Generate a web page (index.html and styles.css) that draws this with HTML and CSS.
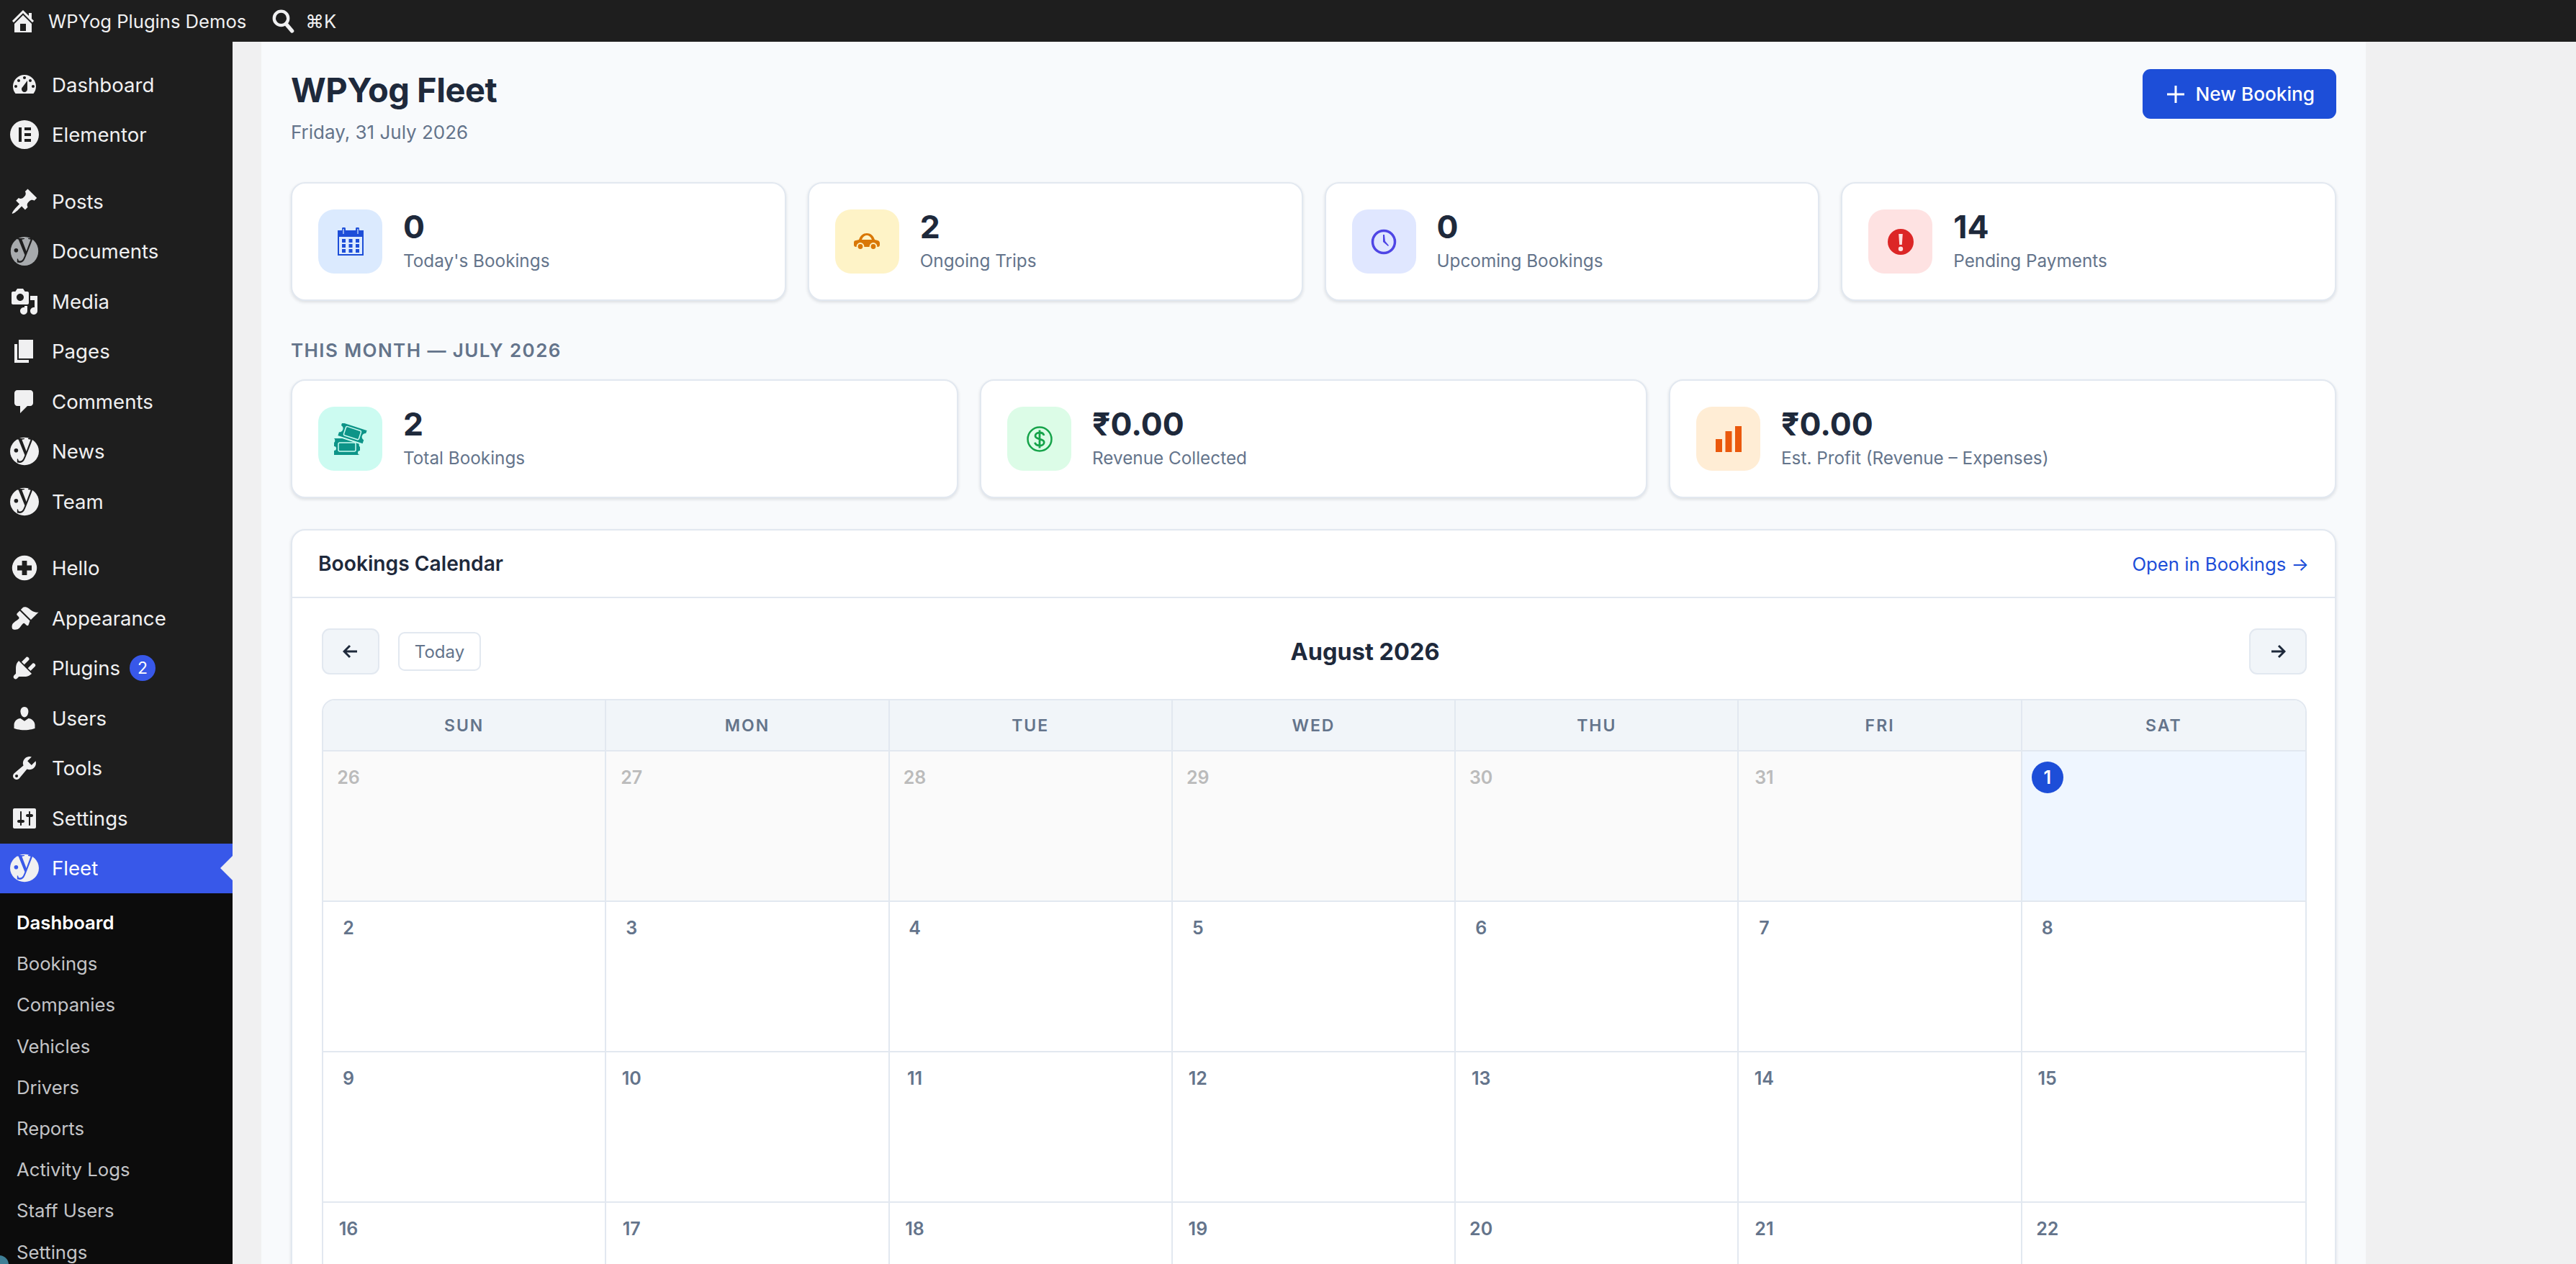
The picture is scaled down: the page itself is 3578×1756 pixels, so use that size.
FILE: index.html
```html
<!DOCTYPE html>
<html lang="en">
<head>
    <meta charset="UTF-8">
    <title>WPYog Fleet</title>
    <link rel="stylesheet" href="styles.css">
</head>
<body>
    <header class="topbar">
        <a class="topbar-item">
            <svg class="topbar-home" viewBox="0 0 20 20"><path d="M16 8.5l1.53 1.53-1.06 1.06L10 4.62l-6.47 6.47-1.06-1.06L10 2.5l4 4v-2h2v4zm-6-2.46l6 5.99V18H4v-5.97zM12 17v-5H8v5h4z"/></svg>
            <span>WPYog Plugins Demos</span>
        </a>
        <a class="topbar-item topbar-search">
            <svg class="topbar-icon" viewBox="0 0 20 20"><circle cx="8.6" cy="8" r="5.4" fill="none" stroke="currentColor" stroke-width="2.4"/><path d="M12.4 12.4l4.6 5.4" fill="none" stroke="currentColor" stroke-width="3" stroke-linecap="round"/></svg>
            <span>⌘K</span>
        </a>
    </header>

    <div class="layout">
        <nav class="sidebar">
            <a class="menu-item">
                <svg class="menu-icon" viewBox="0 0 20 20"><path fill-rule="evenodd" d="M3.76 16h12.48c1.1-1.37 1.76-3.11 1.76-5 0-4.42-3.58-8-8-8s-8 3.58-8 8c0 1.89.66 3.63 1.76 5zM10 4c.55 0 1 .45 1 1s-.45 1-1 1-1-.45-1-1 .45-1 1-1zM6 6c.55 0 1 .45 1 1s-.45 1-1 1-1-.45-1-1 .45-1 1-1zm8 0c.55 0 1 .45 1 1s-.45 1-1 1-1-.45-1-1 .45-1 1-1zm-5.37 5.55L12 7v6c0 1.1-.9 2-2 2s-2-.9-2-2c0-.57.24-1.08.63-1.45zM4 10c.55 0 1 .45 1 1s-.45 1-1 1-1-.45-1-1 .45-1 1-1zm12 0c.55 0 1 .45 1 1s-.45 1-1 1-1-.45-1-1 .45-1 1-1z"/></svg>
                <span>Dashboard</span>
            </a>
            <a class="menu-item menu-item-last">
                <svg class="menu-icon" viewBox="0 0 20 20"><path fill-rule="evenodd" d="M10 0a10 10 0 1 0 0 20 10 10 0 0 0 0-20zM6 5h2v10H6zm4 0h4.5v2H10zm0 4h4.5v2H10zm0 4h4.5v2H10z"/></svg>
                <span>Elementor</span>
            </a>
            <a class="menu-item">
                <svg class="menu-icon" viewBox="0 0 20 20"><path d="M10.44 3.02l1.82-1.82 6.36 6.35-1.83 1.82c-1.05-.68-2.48-.57-3.41.36l-.75.75c-.92.93-1.04 2.35-.35 3.41l-1.83 1.82-2.41-2.41-2.8 2.79c-.42.42-3.38 2.71-3.8 2.29s1.86-3.39 2.28-3.81l2.79-2.79L4.1 9.36l1.83-1.82c1.05.69 2.48.57 3.4-.36l.75-.75c.93-.92 1.05-2.35.36-3.41z"/></svg>
                <span>Posts</span>
            </a>
            <a class="menu-item">
                <svg class="menu-icon logo-muted" viewBox="0 0 20 20"><ellipse cx="10" cy="10" rx="9.6" ry="10"/><circle class="logo-cut" cx="4.2" cy="9.4" r="1.4"/><text class="logo-y" x="10.6" y="12.6" text-anchor="middle">y</text></svg>
                <span>Documents</span>
            </a>
            <a class="menu-item">
                <svg class="menu-icon" viewBox="0 0 20 20"><path d="M13 11V4c0-.55-.45-1-1-1h-1.67L9 1H5L3.67 3H2c-.55 0-1 .45-1 1v7c0 .55.45 1 1 1h10c.55 0 1-.45 1-1zM7 4.5c1.38 0 2.5 1.12 2.5 2.5S8.38 9.5 7 9.5 4.5 8.38 4.5 7 5.62 4.5 7 4.5zM14 6h5v10.5c0 1.38-1.12 2.5-2.5 2.5S14 17.88 14 16.5s1.12-2.5 2.5-2.5c.17 0 .34.02.5.05V9h-3V6zm-4 8.05V13h2v3.5c0 1.38-1.12 2.5-2.5 2.5S7 17.88 7 16.5 8.12 14 9.5 14c.17 0 .34.02.5.05z" fill-rule="evenodd"/></svg>
                <span>Media</span>
            </a>
            <a class="menu-item">
                <svg class="menu-icon" viewBox="0 0 20 20"><path d="M6 15V2h10v13H6zm-1 1h8v2H3V5h2v11z"/></svg>
                <span>Pages</span>
            </a>
            <a class="menu-item">
                <svg class="menu-icon" viewBox="0 0 20 20"><path d="M5 2h9c1.1 0 2 .9 2 2v7c0 1.1-.9 2-2 2h-2l-5 5v-5H5c-1.1 0-2-.9-2-2V4c0-1.1.9-2 2-2z"/></svg>
                <span>Comments</span>
            </a>
            <a class="menu-item">
                <svg class="menu-icon" viewBox="0 0 20 20"><ellipse cx="10" cy="10" rx="10" ry="9.6"/><circle class="logo-cut" cx="4.2" cy="9.4" r="1.4"/><text class="logo-y" x="10.6" y="12.6" text-anchor="middle">y</text></svg>
                <span>News</span>
            </a>
            <a class="menu-item menu-item-last">
                <svg class="menu-icon" viewBox="0 0 20 20"><ellipse cx="10" cy="10" rx="10" ry="9.6"/><circle class="logo-cut" cx="4.2" cy="9.4" r="1.4"/><text class="logo-y" x="10.6" y="12.6" text-anchor="middle">y</text></svg>
                <span>Team</span>
            </a>
            <a class="menu-item">
                <svg class="menu-icon" viewBox="0 0 20 20"><path fill-rule="evenodd" d="M10 1.4a8.6 8.6 0 1 0 0 17.2 8.6 8.6 0 0 0 0-17.2zM8.3 5h3.4v3.3H15v3.4h-3.3V15H8.3v-3.3H5V8.3h3.3z"/></svg>
                <span>Hello</span>
            </a>
            <a class="menu-item">
                <svg class="menu-icon" viewBox="0 0 20 20"><path d="M14.48 11.06L7.41 3.99l1.5-1.5c.5-.56 2.3-.47 3.51.32 1.21.8 1.43 1.28 2.91 2.1 1.18.64 2.45 1.26 4.45.85zm-.71.71L6.7 4.7 4.93 6.47c-.39.39-.39 1.02 0 1.41l1.06 1.06c.39.39.39 1.03 0 1.42-.6.6-1.43 1.11-2.21 1.69-.35.26-.7.53-1.01.84C1.43 13.71.96 15.56 1.53 17.1c.09.24.33.48.57.57 1.54.57 3.39.1 4.23-.74.31-.31.58-.66.84-1.01.58-.78 1.09-1.61 1.69-2.21.39-.39 1.02-.39 1.41 0l1.06 1.06c.39.39 1.02.39 1.41 0z"/></svg>
                <span>Appearance</span>
            </a>
            <a class="menu-item">
                <svg class="menu-icon" viewBox="0 0 20 20"><path d="M13.11 4.36L9.87 7.6 8 5.73l3.24-3.24c.35-.34 1.05-.2 1.56.32.52.51.66 1.21.31 1.55zm-8 1.77l.91-1.12 9.01 9.01-1.19.84c-.71.71-2.63 1.16-3.82 1.16H6.14L4.9 17.26c-.59.59-1.54.59-2.12 0-.59-.58-.59-1.53 0-2.12l1.24-1.24v-3.88c0-1.13.4-3.19 1.09-3.89zm7.26 3.97l3.24-3.24c.34-.35 1.04-.21 1.55.31.52.51.66 1.21.31 1.55l-3.24 3.25z"/></svg>
                <span>Plugins</span>
                <span class="menu-badge">2</span>
            </a>
            <a class="menu-item">
                <svg class="menu-icon" viewBox="0 0 20 20"><path d="M10 9.25c-2.27 0-2.73-3.44-2.73-3.44C7 4.02 7.82 2 9.97 2c2.16 0 2.98 2.02 2.71 3.81 0 0-.41 3.44-2.68 3.44zm0 2.57L12.72 10c2.39 0 4.52 2.33 4.52 4.53v2.49s-3.65 1.13-7.24 1.13c-3.65 0-7.24-1.13-7.24-1.13v-2.49c0-2.25 1.94-4.48 4.47-4.48z"/></svg>
                <span>Users</span>
            </a>
            <a class="menu-item">
                <svg class="menu-icon" viewBox="0 0 20 20"><path fill-rule="evenodd" d="M16.68 9.77c-1.34 1.34-3.3 1.67-4.95.99l-5.41 6.52c-.99.99-2.59.99-3.58 0s-.99-2.59 0-3.57l6.52-5.42c-.68-1.65-.35-3.61.99-4.95 1.28-1.28 3.12-1.62 4.72-1.06l-2.89 2.89 2.82 2.82 2.86-2.87c.53 1.58.18 3.39-1.08 4.65zM3.81 16.21c.4.39 1.04.39 1.43 0 .4-.4.4-1.04 0-1.43-.39-.4-1.03-.4-1.43 0-.39.39-.39 1.03 0 1.43z"/></svg>
                <span>Tools</span>
            </a>
            <a class="menu-item">
                <svg class="menu-icon" viewBox="0 0 20 20"><path fill-rule="evenodd" d="M18 16V4c0-.55-.45-1-1-1H3c-.55 0-1 .45-1 1v12c0 .55.45 1 1 1h14c.55 0 1-.45 1-1zM8 11h1c.55 0 1 .45 1 1s-.45 1-1 1H8v1.5c0 .28-.22.5-.5.5s-.5-.22-.5-.5V13H6c-.55 0-1-.45-1-1s.45-1 1-1h1V5.5c0-.28.22-.5.5-.5s.5.22.5.5V11zm5-2h-1c-.55 0-1-.45-1-1s.45-1 1-1h1V5.5c0-.28.22-.5.5-.5s.5.22.5.5V7h1c.55 0 1 .45 1 1s-.45 1-1 1h-1v5.5c0 .28-.22.5-.5.5s-.5-.22-.5-.5V9z"/></svg>
                <span>Settings</span>
            </a>
            <a class="menu-item menu-item-active">
                <svg class="menu-icon" viewBox="0 0 20 20"><ellipse cx="10" cy="10" rx="10" ry="9.6"/><circle class="logo-cut" cx="4.2" cy="9.4" r="1.4"/><text class="logo-y" x="10.6" y="12.6" text-anchor="middle">y</text></svg>
                <span>Fleet</span>
            </a>
            <div class="submenu">
                <a class="submenu-item submenu-item-active">Dashboard</a>
                <a class="submenu-item">Bookings</a>
                <a class="submenu-item">Companies</a>
                <a class="submenu-item">Vehicles</a>
                <a class="submenu-item">Drivers</a>
                <a class="submenu-item">Reports</a>
                <a class="submenu-item">Activity Logs</a>
                <a class="submenu-item">Staff Users</a>
                <a class="submenu-item">Settings</a>
            </div>
        </nav>

        <main class="content">
            <div class="page">
                <div class="page-head">
                    <div>
                        <h1>WPYog Fleet</h1>
                        <p class="page-date">Friday, 31 July 2026</p>
                    </div>
                    <a class="btn-primary">
                        <svg class="btn-plus" viewBox="0 0 24 24"><path d="M12 0v24M0 12h24"/></svg>
                        New Booking
                    </a>
                </div>

                <div class="stat-row stat-row-four">
                    <div class="stat-card">
                        <div class="stat-icon stat-icon-blue">
                            <svg width="36" height="39" viewBox="0 0 36 39"><path fill-rule="evenodd" d="M0 4h6V2a2.5 2.5 0 0 1 5 0v2h14V2a2.5 2.5 0 0 1 5 0v2h6v35H0zM2 13v24h32V13zM7.4 2v7h1.2V2zm20 0v7h1.2V2z"/><path d="M6 16h5v5H6zm9.5 0h5v5h-5zm9.5 0h5v5h-5zM6 23h5v5H6zm9.5 0h5v5h-5zm9.5 0h5v5h-5zM6 30h5v5H6zm9.5 0h5v5h-5zm9.5 0h5v5h-5z"/></svg>
                        </div>
                        <div class="stat-text">
                            <div class="stat-value">0</div>
                            <div class="stat-label">Today's Bookings</div>
                        </div>
                    </div>
                    <div class="stat-card">
                        <div class="stat-icon stat-icon-amber">
                            <svg width="36" height="24" viewBox="0 0 36 24"><path fill-rule="evenodd" d="M7 9C9 3 13 0 18 0s9 3 11 9l4 1c2 .5 3 2 3 4v2c0 2-1 3-3 3H3c-2 0-3-1-3-3v-3c0-2 1-3 3-3zm4 0h14c-1.5-3.500-3.5-6-7-6s-5.5 2.500-7 6z"/><circle class="car-wheel" cx="9" cy="18.5" r="4.4"/><circle class="car-wheel" cx="27" cy="18.5" r="4.4"/></svg>
                        </div>
                        <div class="stat-text">
                            <div class="stat-value">2</div>
                            <div class="stat-label">Ongoing Trips</div>
                        </div>
                    </div>
                    <div class="stat-card">
                        <div class="stat-icon stat-icon-indigo">
                            <svg width="36" height="36" viewBox="0 0 36 36"><circle cx="18" cy="18" r="15.5" fill="none" stroke="currentColor" stroke-width="3.5"/><path d="M17 8h2l1 9 5 6-1 1-7-6z"/></svg>
                        </div>
                        <div class="stat-text">
                            <div class="stat-value">0</div>
                            <div class="stat-label">Upcoming Bookings</div>
                        </div>
                    </div>
                    <div class="stat-card">
                        <div class="stat-icon stat-icon-red">
                            <svg width="36" height="36" viewBox="0 0 36 36"><path fill-rule="evenodd" d="M18 0a18 18 0 1 0 0 36 18 18 0 0 0 0-36zM15.2 7h5.6l-1 15h-3.6zM18 24.5a3.2 3.2 0 1 1 0 6.4 3.2 3.2 0 0 1 0-6.4z"/></svg>
                        </div>
                        <div class="stat-text">
                            <div class="stat-value">14</div>
                            <div class="stat-label">Pending Payments</div>
                        </div>
                    </div>
                </div>

                <div class="section-label">THIS MONTH — JULY 2026</div>

                <div class="stat-row stat-row-three">
                    <div class="stat-card">
                        <div class="stat-icon stat-icon-teal">
                            <svg width="46" height="44" viewBox="0 0 46 44">
                                <path d="M0 21h36v6a4 4 0 0 0 0 6v5a3 3 0 0 0 0 6H0v-6a3 3 0 0 0 0-6v-5a4 4 0 0 0 0-6z"/>
                                <rect class="ticket-line" x="6" y="27" width="24" height="12" rx="2"/>
                                <g transform="rotate(18 25 15)">
                                    <path class="ticket-top" d="M6 3h38v6a4 4 0 0 0 0 8v7H6v-7a4 4 0 0 0 0-8z"/>
                                    <rect class="ticket-line" x="14" y="7" width="22" height="13" rx="2"/>
                                </g>
                            </svg>
                        </div>
                        <div class="stat-text">
                            <div class="stat-value">2</div>
                            <div class="stat-label">Total Bookings</div>
                        </div>
                    </div>
                    <div class="stat-card">
                        <div class="stat-icon stat-icon-green">
                            <svg width="36" height="36" viewBox="0 0 36 36"><circle cx="18" cy="18" r="16.5" fill="none" stroke="currentColor" stroke-width="2.5"/><path d="M24 13c-.5-2.5-3-4-6-4s-6 1.8-6 4.6c0 6 12.200 3 12.200 8.800 0 2.800-3 4.600-6.200 4.600s-6-1.500-6.500-4.200M18 5.500v25" fill="none" stroke="currentColor" stroke-width="2.8"/></svg>
                        </div>
                        <div class="stat-text">
                            <div class="stat-value">₹0.00</div>
                            <div class="stat-label">Revenue Collected</div>
                        </div>
                    </div>
                    <div class="stat-card">
                        <div class="stat-icon stat-icon-orange">
                            <svg width="36" height="36" viewBox="0 0 36 36"><path d="M0 18h9v18H0zm13.5-11h9v29h-9zM27 0h9v36h-9z"/></svg>
                        </div>
                        <div class="stat-text">
                            <div class="stat-value">₹0.00</div>
                            <div class="stat-label">Est. Profit (Revenue – Expenses)</div>
                        </div>
                    </div>
                </div>

                <section class="calendar-card">
                    <div class="calendar-head">
                        <h2>Bookings Calendar</h2>
                        <a class="calendar-link">Open in Bookings →</a>
                    </div>
                    <div class="calendar-body">
                        <div class="calendar-nav">
                            <div class="calendar-nav-left">
                                <button class="nav-btn">
                                    <svg class="nav-arrow" viewBox="0 0 22 22"><path d="M20 11H3M10 3l-8 8 8 8"/></svg>
                                </button>
                                <button class="today-btn">Today</button>
                            </div>
                            <div class="calendar-title">August 2026</div>
                            <button class="nav-btn">
                                <svg class="nav-arrow" viewBox="0 0 22 22"><path d="M2 11h17M12 3l8 8-8 8"/></svg>
                            </button>
                        </div>
                        <div class="calendar-grid">
                            <div class="day-head">SUN</div>
                            <div class="day-head">MON</div>
                            <div class="day-head">TUE</div>
                            <div class="day-head">WED</div>
                            <div class="day-head">THU</div>
                            <div class="day-head">FRI</div>
                            <div class="day-head">SAT</div>

                            <div class="day day-other"><span class="day-num">26</span></div>
                            <div class="day day-other"><span class="day-num">27</span></div>
                            <div class="day day-other"><span class="day-num">28</span></div>
                            <div class="day day-other"><span class="day-num">29</span></div>
                            <div class="day day-other"><span class="day-num">30</span></div>
                            <div class="day day-other"><span class="day-num">31</span></div>
                            <div class="day day-today"><span class="day-num">1</span></div>

                            <div class="day"><span class="day-num">2</span></div>
                            <div class="day"><span class="day-num">3</span></div>
                            <div class="day"><span class="day-num">4</span></div>
                            <div class="day"><span class="day-num">5</span></div>
                            <div class="day"><span class="day-num">6</span></div>
                            <div class="day"><span class="day-num">7</span></div>
                            <div class="day"><span class="day-num">8</span></div>

                            <div class="day"><span class="day-num">9</span></div>
                            <div class="day"><span class="day-num">10</span></div>
                            <div class="day"><span class="day-num">11</span></div>
                            <div class="day"><span class="day-num">12</span></div>
                            <div class="day"><span class="day-num">13</span></div>
                            <div class="day"><span class="day-num">14</span></div>
                            <div class="day"><span class="day-num">15</span></div>

                            <div class="day"><span class="day-num">16</span></div>
                            <div class="day"><span class="day-num">17</span></div>
                            <div class="day"><span class="day-num">18</span></div>
                            <div class="day"><span class="day-num">19</span></div>
                            <div class="day"><span class="day-num">20</span></div>
                            <div class="day"><span class="day-num">21</span></div>
                            <div class="day"><span class="day-num">22</span></div>
                        </div>
                    </div>
                </section>
            </div>
        </main>
    </div>
    <div class="screen-corner"></div>
</body>
</html>
```

FILE: styles.css
```css
html, body {
    margin: 0;
    height: 100%;
    overflow: hidden;
}

body {
    font-family: Inter, "Noto Sans", sans-serif;
    background: #f0f0f1;
    color: #1e293b;
}

h1, h2, p {
    margin: 0;
}

.topbar {
    display: flex;
    align-items: center;
    height: 58px;
    background: #1e1e1e;
    color: #f0f0f1;
    font-size: 25.6px;
}

.topbar-item {
    display: flex;
    align-items: center;
    gap: 15px;
    padding-left: 12px;
}

.topbar-search {
    gap: 13px;
    padding-left: 33px;
}

.topbar-home {
    width: 40px;
    height: 40px;
    fill: currentColor;
}

.topbar-icon {
    width: 36px;
    height: 36px;
    fill: currentColor;
}

.layout {
    display: flex;
    height: calc(100vh - 58px);
}

.sidebar {
    width: 323px;
    flex: none;
    box-sizing: border-box;
    padding-top: 25px;
    background: #1e1e1e;
    color: #f0f0f1;
    font-size: 27.6px;
}

.menu-item {
    position: relative;
    display: flex;
    align-items: center;
    height: 69.5px;
}

.menu-item-last {
    margin-bottom: 23px;
}

.menu-icon {
    width: 40px;
    height: 40px;
    margin: 0 18px 0 14px;
    fill: #f0f0f1;
    flex: none;
    overflow: visible;
}

.logo-muted {
    fill: #a7aaad;
}

.logo-cut {
    fill: #1e1e1e;
}

.logo-y {
    font-family: "Liberation Serif", serif;
    font-size: 25px;
    fill: #1e1e1e;
}

.menu-badge {
    width: 36px;
    height: 36px;
    margin-left: 13px;
    border-radius: 50%;
    background: #3858e9;
    color: #fff;
    font-size: 23px;
    line-height: 36px;
    text-align: center;
}

.menu-item-active {
    background: #3858e9;
    color: #fff;
}

.menu-item-active .logo-cut {
    fill: #3858e9;
}

.menu-item-active .logo-y {
    fill: #3858e9;
}

.menu-item-active::after {
    content: "";
    position: absolute;
    top: 50%;
    right: 0;
    margin-top: -17px;
    border: 17px solid transparent;
    border-right-color: #f0f0f1;
    border-left-width: 0;
}

.submenu {
    padding-top: 12px;
    min-height: 600px;
    background: #0c0c0c;
    color: #c3c4c7;
    font-size: 25.7px;
}

.submenu-item {
    display: block;
    height: 57.2px;
    padding-left: 23px;
    line-height: 57.2px;
}

.submenu-item-active {
    color: #fff;
    font-weight: 600;
}

.content {
    flex: 1;
    padding-left: 40px;
}

.page {
    width: 2923px;
    height: 100%;
    box-sizing: border-box;
    padding: 38px 41px 0 41px;
    background: #f8fafc;
}

.page-head {
    display: flex;
    justify-content: space-between;
    align-items: flex-start;
    height: 157px;
}

h1 {
    font-size: 47px;
    font-weight: 700;
    line-height: 58px;
    letter-spacing: -0.5px;
}

.page-date {
    margin-top: 11px;
    font-size: 26px;
    line-height: 38px;
    color: #64748b;
}

.btn-primary {
    display: flex;
    align-items: center;
    gap: 15px;
    height: 69px;
    box-sizing: border-box;
    padding: 0 30px 0 34px;
    border-radius: 11px;
    background: #1d4ed8;
    color: #fff;
    font-size: 26.2px;
    font-weight: 500;
}

.btn-plus {
    width: 24px;
    height: 24px;
    stroke: #fff;
    stroke-width: 3;
    fill: none;
}

.stat-row {
    display: grid;
    gap: 30px;
}

.stat-row-four {
    grid-template-columns: repeat(4, 1fr);
}

.stat-row-three {
    grid-template-columns: repeat(3, 1fr);
}

.stat-card {
    display: flex;
    align-items: center;
    gap: 29px;
    box-sizing: border-box;
    height: 165px;
    padding: 0 36px;
    border: 2px solid #e2e8f0;
    border-radius: 20px;
    background: #fff;
    box-shadow: 0 2px 4px rgba(15, 23, 42, 0.12);
}

.stat-icon {
    display: flex;
    align-items: center;
    justify-content: center;
    width: 89px;
    height: 89px;
    flex: none;
    border-radius: 22px;
}

.stat-icon svg {
    fill: currentColor;
}

.stat-icon-blue {
    background: #dbeafe;
    color: #1d4ed8;
}

.stat-icon-amber {
    background: #fef3c7;
    color: #d97706;
}

.car-wheel {
    stroke: #fef3c7;
    stroke-width: 2;
}

.stat-icon-indigo {
    background: #e0e7ff;
    color: #4f46e5;
}

.stat-icon-red {
    background: #fee2e2;
    color: #dc2626;
}

.stat-icon-teal {
    background: #ccfbf1;
    color: #0d9488;
}

.ticket-top {
    stroke: #ccfbf1;
    stroke-width: 2;
}

.stat-icon .ticket-line {
    fill: none;
    stroke: #ccfbf1;
    stroke-width: 1.5;
}

.stat-icon-green {
    background: #dcfce7;
    color: #16a34a;
}

.stat-icon-orange {
    background: #ffedd5;
    color: #ea580c;
}

.stat-text {
    padding-bottom: 3px;
}

.stat-value {
    font-size: 44.5px;
    font-weight: 700;
    line-height: 50px;
}

.stat-label {
    margin-top: 6px;
    font-size: 24.3px;
    line-height: 32px;
    color: #64748b;
}

.section-label {
    margin: 49px 0 20px;
    font-size: 26px;
    font-weight: 600;
    line-height: 40px;
    letter-spacing: 1.4px;
    color: #64748b;
}

.calendar-card {
    margin-top: 43px;
    border: 2px solid #e2e8f0;
    border-radius: 20px;
    background: #fff;
    box-shadow: 0 2px 4px rgba(15, 23, 42, 0.12);
}

.calendar-head {
    display: flex;
    justify-content: space-between;
    align-items: center;
    height: 92px;
    padding: 0 36px;
    border-bottom: 2px solid #e2e8f0;
}

h2 {
    font-size: 28.2px;
    font-weight: 600;
}

.calendar-link {
    font-size: 25.7px;
    color: #1d4ed8;
}

.calendar-body {
    padding: 42px 39px 0 41px;
}

.calendar-nav {
    display: flex;
    justify-content: space-between;
    align-items: center;
    height: 64px;
}

.calendar-nav-left {
    display: flex;
    align-items: center;
    gap: 26px;
}

.nav-btn {
    display: flex;
    align-items: center;
    justify-content: center;
    width: 80px;
    height: 64px;
    padding: 0;
    border: 2px solid #e2e8f0;
    border-radius: 11px;
    background: #f1f5f9;
}

.nav-arrow {
    width: 22px;
    height: 22px;
    fill: none;
    stroke: #1e293b;
    stroke-width: 3;
}

.today-btn {
    width: 115px;
    height: 54px;
    padding: 0;
    border: 2px solid #e2e8f0;
    border-radius: 9px;
    background: #fff;
    font-family: inherit;
    font-size: 24px;
    color: #64748b;
}

.calendar-title {
    font-size: 32.5px;
    font-weight: 700;
}

.calendar-grid {
    display: grid;
    grid-template-columns: repeat(7, 1fr);
    grid-template-rows: 71px;
    grid-auto-rows: 209px;
    margin-top: 34px;
    border: 2px solid #e2e8f0;
    border-radius: 18px;
    overflow: hidden;
}

.day-head {
    display: flex;
    align-items: center;
    justify-content: center;
    background: #f1f5f9;
    border-right: 2px solid #e2e8f0;
    border-bottom: 2px solid #e2e8f0;
    font-size: 23px;
    font-weight: 600;
    letter-spacing: 2px;
    color: #64748b;
}

.day {
    box-sizing: border-box;
    padding: 14px 13px;
    border-right: 2px solid #e2e8f0;
    border-bottom: 2px solid #e2e8f0;
}

.day-head:nth-child(7n), .day:nth-child(7n) {
    border-right: none;
}

.day-num {
    display: block;
    width: 44px;
    height: 44px;
    border-radius: 50%;
    font-size: 25px;
    font-weight: 600;
    line-height: 44px;
    text-align: center;
    color: #64748b;
}

.day-other {
    background: #fafafa;
}

.day-other .day-num {
    color: #bbb;
}

.day-today {
    background: #eff6ff;
}

.day-today .day-num {
    background: #1d4ed8;
    color: #fff;
}

.screen-corner {
    position: fixed;
    left: -14px;
    bottom: -14px;
    width: 26px;
    height: 26px;
    border-radius: 50%;
    background: #3f7f96;
}
```
